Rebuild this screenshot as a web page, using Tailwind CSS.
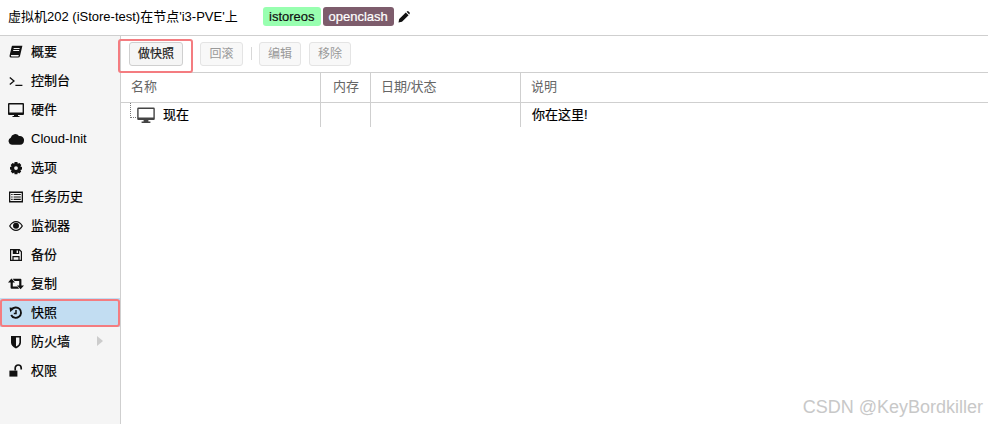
<!DOCTYPE html>
<html>
  <head>
    <meta charset="UTF-8" />
    <script src="https://cdn.jsdelivr.net/npm/@tailwindcss/browser@4"></script>
  </head>

  <body class="w-[988px] h-[424px] overflow-hidden bg-white text-[13px] text-black font-['Liberation_Sans','Noto_Sans_CJK_SC',sans-serif]">
    <!-- title bar -->
    <header class="h-[36px] border-b border-[#cfcfcf] flex items-center pl-[8px] pb-[2px]">
      <span class="w-[255px] shrink-0 text-[13px]">虚拟机202 (iStore-test)在节点'i3-PVE'上</span>
      <span class="h-[19px] px-[6px] flex items-center rounded-[3px] bg-[#98ffb0] text-[#111] [-webkit-text-stroke:0.2px]">istoreos</span>
      <span class="ml-[2px] h-[19px] px-[6px] flex items-center rounded-[3px] bg-[#7d5c6c] text-white [-webkit-text-stroke:0.2px]">openclash</span>
      <svg class="ml-[4px] w-[12px] h-[12px]" viewBox="0 0 12 12" fill="#111"><path d="M0.5 11.5 L1.2 8 L7.8 1.4 L10.6 4.2 L4 10.8 Z M8.6 0.8 L9.4 0.2 Q10 -0.1 10.6 0.4 L11.6 1.4 Q12.1 2 11.7 2.6 L11.2 3.4 Z" /></svg>
    </header>

    <div class="flex h-[388px]">
      <!-- side menu -->
      <nav class="w-[121px] shrink-0 bg-[#f5f5f5] border-r border-[#cfcfcf] pt-[1px] [-webkit-text-stroke:0.2px]">
        <a class="h-[29px] pl-[8px] flex items-center gap-[7px]">
          <svg class="w-[16px] h-[16px]" viewBox="-1 -1 16 16" fill="#111"><path d="M3.5 0.8 H13.4 L11 11 Q10.7 12.6 9 12.6 H1.8 Q0.2 12.6 0.6 10.6 L2.6 2 Q2.8 0.8 3.5 0.8 Z M4.6 3 V4 H10.6 V3 Z M4.2 5 V6 H10.2 V5 Z M2 10 Q1.6 11.4 2.6 11.4 H9.4 L9.8 10 Z" fill-rule="evenodd" /></svg>
          <span>概要</span>
        </a>
        <a class="h-[29px] pl-[8px] flex items-center gap-[7px]">
          <svg class="w-[16px] h-[16px]" viewBox="-1 -1 16 16" fill="none" stroke="#111" stroke-width="1.3"><path d="M0.8 3.4 L5 7 L0.8 10.6 M6.4 11.4 H13.4" /></svg>
          <span>控制台</span>
        </a>
        <a class="h-[29px] pl-[8px] flex items-center gap-[7px]">
          <svg class="w-[16px] h-[16px]" viewBox="0 0 16 16" fill="#111"><path fill-rule="evenodd" d="M1 1 H15 Q16 1 16 2 V12 Q16 13 15 13 H10 V14 H11.5 V15 H4.5 V14 H6 V13 H1 Q0 13 0 12 V2 Q0 1 1 1 Z M1.4 2.4 V10.6 H14.6 V2.4 Z" /></svg>
          <span>硬件</span>
        </a>
        <a class="h-[29px] pl-[8px] flex items-center gap-[7px]">
          <svg class="w-[16px] h-[16px]" viewBox="0 0 14 14" fill="#111"><path d="M3.4 12 A3.2 3.2 0 0 1 2.4 5.9 A4 4 0 0 1 9.6 4.4 A3.6 3.6 0 0 1 14 8.2 A3.8 3.8 0 0 1 10.5 12 Z" /></svg>
          <span class="[-webkit-text-stroke:0px]">Cloud-Init</span>
        </a>
        <a class="h-[29px] pl-[8px] flex items-center gap-[7px]">
          <svg class="w-[16px] h-[16px]" viewBox="-1 -1 16 16" fill="#111"><path fill-rule="evenodd" d="M5.6 1 H8.4 L8.8 2.8 L10.4 2 L12.3 3.9 L11.4 5.4 L13 6 V8.6 L11.4 9 L12.2 10.6 L10.3 12.5 L8.8 11.6 L8.4 13.2 H5.6 L5.2 11.6 L3.7 12.5 L1.8 10.6 L2.6 9 L1 8.6 V6 L2.6 5.4 L1.7 3.9 L3.6 2 L5.2 2.8 Z M7 5.2 A1.9 1.9 0 1 0 7 9 A1.9 1.9 0 1 0 7 5.2 Z" /></svg>
          <span>选项</span>
        </a>
        <a class="h-[29px] pl-[8px] flex items-center gap-[7px]">
          <svg class="w-[16px] h-[16px]" viewBox="-1 -1 16 16" fill="#111"><path fill-rule="evenodd" d="M0 1.6 H14 V12.4 H0 Z M1.3 3 V11 H12.7 V3 Z" /><path d="M2.2 4 H3.6 V5.1 H2.2 Z M4.6 4 H11.8 V5.1 H4.6 Z M2.2 6.4 H3.6 V7.5 H2.2 Z M4.6 6.4 H11.8 V7.5 H4.6 Z M2.2 8.8 H3.6 V9.9 H2.2 Z M4.6 8.8 H11.8 V9.9 H4.6 Z" /></svg>
          <span>任务历史</span>
        </a>
        <a class="h-[29px] pl-[8px] flex items-center gap-[7px]">
          <svg class="w-[16px] h-[16px]" viewBox="-1 -1 16 16" fill="#111"><path fill-rule="evenodd" d="M0 7 Q3 2 7 2 Q11 2 14 7 Q11 12 7 12 Q3 12 0 7 Z M1.4 7 Q3.6 10.7 7 10.7 Q10.4 10.7 12.6 7 Q10.4 3.3 7 3.3 Q3.6 3.3 1.4 7 Z" /><circle cx="7" cy="6.8" r="3" /></svg>
          <span>监视器</span>
        </a>
        <a class="h-[29px] pl-[8px] flex items-center gap-[7px]">
          <svg class="w-[16px] h-[16px]" viewBox="-1 -1 16 16" fill="#111"><path fill-rule="evenodd" d="M1 1 H10.6 L13 3.4 V13 H1 Z M2.2 2.2 V11.8 H3.4 V8 H10.6 V11.8 H11.8 V4 L10.2 2.4 V6 H3.8 V2.2 Z M4.6 9.2 V11.8 H9.4 V9.2 Z M7.6 2.4 V5 H9 V2.4 Z" /></svg>
          <span>备份</span>
        </a>
        <a class="h-[29px] pl-[8px] flex items-center gap-[7px]">
          <svg class="w-[16px] h-[16px]" viewBox="0 0 16 16" fill="#111"><path d="M3.4 2.6 L7 6.4 H4.8 V10.6 H9.4 L11.2 12.8 H3.6 Q2.6 12.8 2.6 11.8 V6.4 H0 Z M4.6 2.8 H12.4 Q13.4 2.8 13.4 3.8 V9.4 H16 L12.6 13.2 L9 9.4 H11.2 V5 H6.6 Z" /></svg>
          <span>复制</span>
        </a>
        <a class="h-[29px] pl-[8px] flex items-center gap-[7px] bg-[#c2ddf2]">
          <svg class="w-[16px] h-[16px]" viewBox="-1 -1 16 16" fill="none" stroke="#111" stroke-width="1.9"><path d="M2.6 3.6 A5.2 5.2 0 1 1 2.2 9" /><path d="M7 4 V7.4 H4.8" stroke-width="1.5" /><path d="M0.6 1.4 L5.4 1.9 L1.2 6.2 Z" fill="#111" stroke="none" /></svg>
          <span>快照</span>
        </a>
        <a class="h-[29px] pl-[8px] flex items-center gap-[7px] relative">
          <svg class="w-[16px] h-[16px]" viewBox="-1 -1 16 16" fill="#111"><path fill-rule="evenodd" d="M2 1 H12 V7.4 Q12 11 7 13.4 Q2 11 2 7.4 Z M7 2.6 V11.6 Q10.4 9.8 10.4 7.4 V2.6 Z" /></svg>
          <span>防火墙</span>
          <span class="absolute left-[97px] top-[9px] w-0 h-0 border-y-[5.5px] border-y-transparent border-l-[6px] border-l-[#cccccc]"></span>
        </a>
        <a class="h-[29px] pl-[8px] flex items-center gap-[7px]">
          <svg class="w-[16px] h-[16px]" viewBox="-1 -1 16 16" fill="#111"><path d="M0.4 6.6 H8.4 V12.6 H0.4 Z" /><path d="M6.2 6.6 V4 A3 3 0 0 1 12.2 4 V5.6" fill="none" stroke="#111" stroke-width="1.7" /></svg>
          <span>权限</span>
        </a>
      </nav>

      <!-- snapshot panel -->
      <main class="flex-1 min-w-0 relative">
        <div class="h-[37px] border-b border-[#cfcfcf] flex items-center pl-[8px] pb-[1px] text-[12px]">
          <button class="w-[54px] h-[24px] rounded-[3px] border border-[#cfcfcf] bg-[#f5f5f5] text-[#222] [-webkit-text-stroke:0.2px]">做快照</button>
          <button class="ml-[17px] w-[43px] h-[24px] rounded-[3px] border border-[#e4e4e4] bg-[#f8f8f8] text-[#9a9a9a]">回滚</button>
          <span class="ml-[8px] w-px h-[13px] bg-[#d8d8d8]"></span>
          <button class="ml-[7px] w-[42px] h-[24px] rounded-[3px] border border-[#e4e4e4] bg-[#f8f8f8] text-[#9a9a9a]">编辑</button>
          <button class="ml-[8px] w-[42px] h-[24px] rounded-[3px] border border-[#e4e4e4] bg-[#f8f8f8] text-[#9a9a9a]">移除</button>
        </div>

        <div class="h-[30px] border-b border-[#cfcfcf] grid grid-cols-[200px_50px_150px_1fr] items-stretch text-[#666]">
          <div class="border-r border-[#cfcfcf] pl-[10px] pb-[1px] flex items-center">名称</div>
          <div class="border-r border-[#cfcfcf] pl-[12px] pb-[1px] flex items-center">内存</div>
          <div class="border-r border-[#cfcfcf] pl-[10px] pb-[1px] flex items-center">日期/状态</div>
          <div class="pl-[10px] pb-[1px] flex items-center">说明</div>
        </div>

        <div class="h-[24px] grid grid-cols-[200px_50px_150px_1fr] items-stretch [-webkit-text-stroke:0.2px]">
          <div class="border-r border-[#cfcfcf] pl-[9px] flex items-center relative">
            <span class="absolute left-[9px] top-0 w-[6px] h-[15px] border-l border-b border-dotted border-[#777]"></span>
            <svg class="ml-[7px] w-[18px] h-[17px]" viewBox="0 0 18 17" fill="#444"><path fill-rule="evenodd" d="M1.4 0.6 H16.6 Q17.8 0.6 17.8 1.8 V12 Q17.8 13 16.6 13 H1.4 Q0.2 13 0.2 12 V1.8 Q0.2 0.6 1.4 0.6 Z M1.6 2 V10.4 H16.4 V2 Z" /><path d="M6.6 13 H11.4 V14.6 H13.4 V16 H4.6 V14.6 H6.6 Z" /></svg>
            <span class="ml-[8px]">现在</span>
          </div>
          <div class="border-r border-[#cfcfcf]"></div>
          <div class="border-r border-[#cfcfcf]"></div>
          <div class="pl-[11px] flex items-center">你在这里!</div>
        </div>

        <!-- red call-out box drawn on the screenshot -->
        <div class="absolute left-[-3px] top-[3px] w-[75px] h-[34px] border-2 border-[#f47c80] rounded-[3px]"></div>
      </main>
    </div>

    <div class="absolute left-0 top-[299px] w-[120px] h-[28px] border-2 border-[#f47c80] rounded-[3px]"></div>
    <div class="absolute right-[5px] top-[394px] text-[18px] text-[#c8c8c8]">CSDN @KeyBordkiller</div>
  </body>
</html>
